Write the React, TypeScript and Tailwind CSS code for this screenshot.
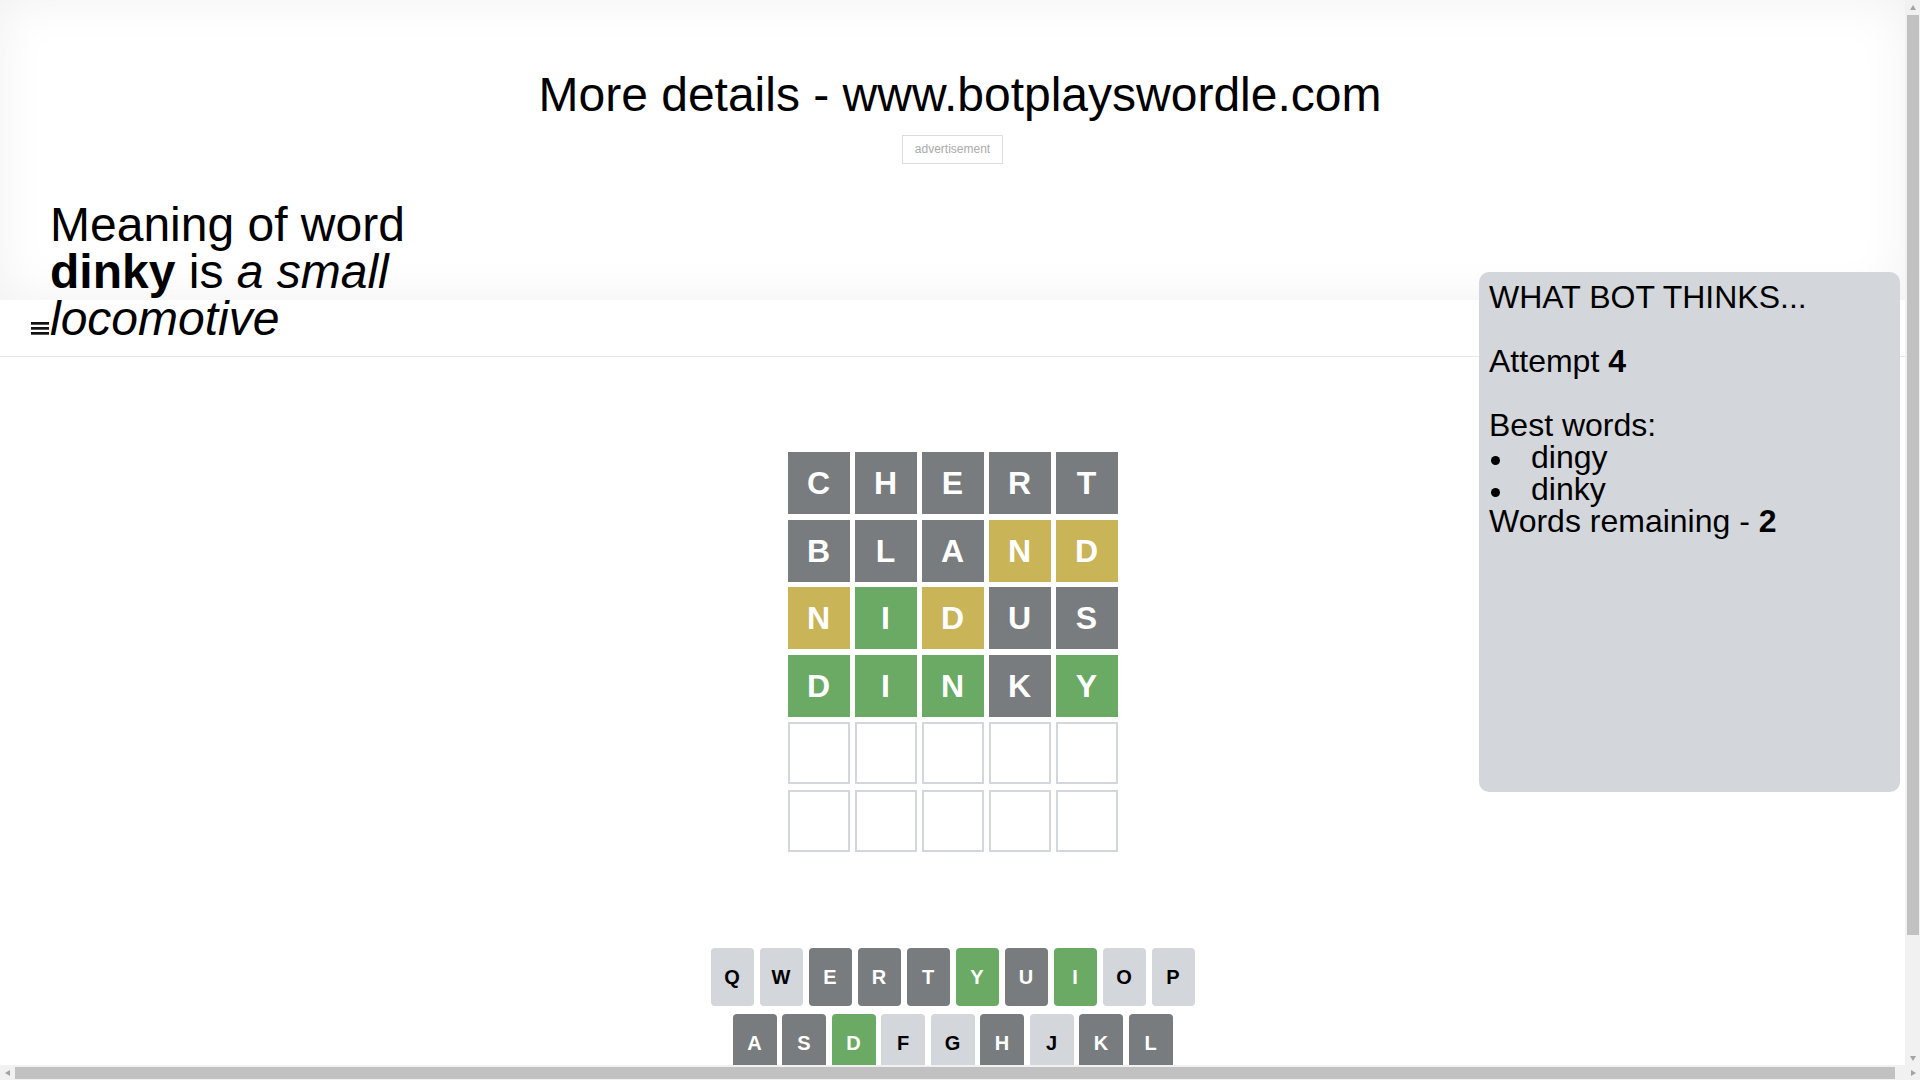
import React from 'react';

type Mark = 'gray' | 'yellow' | 'green' | 'empty';

const rows: { letter: string; mark: Mark }[][] = [
  [
    { letter: 'C', mark: 'gray' },
    { letter: 'H', mark: 'gray' },
    { letter: 'E', mark: 'gray' },
    { letter: 'R', mark: 'gray' },
    { letter: 'T', mark: 'gray' },
  ],
  [
    { letter: 'B', mark: 'gray' },
    { letter: 'L', mark: 'gray' },
    { letter: 'A', mark: 'gray' },
    { letter: 'N', mark: 'yellow' },
    { letter: 'D', mark: 'yellow' },
  ],
  [
    { letter: 'N', mark: 'yellow' },
    { letter: 'I', mark: 'green' },
    { letter: 'D', mark: 'yellow' },
    { letter: 'U', mark: 'gray' },
    { letter: 'S', mark: 'gray' },
  ],
  [
    { letter: 'D', mark: 'green' },
    { letter: 'I', mark: 'green' },
    { letter: 'N', mark: 'green' },
    { letter: 'K', mark: 'gray' },
    { letter: 'Y', mark: 'green' },
  ],
  Array.from({ length: 5 }, () => ({ letter: '', mark: 'empty' as Mark })),
  Array.from({ length: 5 }, () => ({ letter: '', mark: 'empty' as Mark })),
];

const tileClass: Record<Mark, string> = {
  gray: 'bg-[#787c7e] text-white',
  yellow: 'bg-[#c9b458] text-white',
  green: 'bg-[#6aaa64] text-white',
  empty: 'bg-white border-2 border-[#d3d6da]',
};

// keyboard state after four guesses
const keyState: Record<string, Mark> = {
  C: 'gray', H: 'gray', E: 'gray', R: 'gray', T: 'gray',
  B: 'gray', L: 'gray', A: 'gray', U: 'gray', S: 'gray', K: 'gray',
  N: 'green', D: 'green', I: 'green', Y: 'green',
};

const keyClass = (k: string) => {
  const m = keyState[k];
  if (m === 'gray') return 'bg-[#787c7e] text-white';
  if (m === 'green') return 'bg-[#6aaa64] text-white';
  if (m === 'yellow') return 'bg-[#c9b458] text-white';
  return 'bg-[#d3d6da] text-black';
};

function Key({ k, width }: { k: string; width: string }) {
  return (
    <div className={`${width} h-[58px] rounded-[4px] flex items-center justify-center text-[20px] font-bold ${keyClass(k)}`}>
      {k}
    </div>
  );
}

function Arrow({ dir }: { dir: 'up' | 'down' | 'left' | 'right' }) {
  const pts = {
    up: '4,1 7,6 1,6',
    down: '1,2 7,2 4,7',
    left: '6,1 6,7 1,4',
    right: '2,1 2,7 7,4',
  }[dir];
  return (
    <svg width="8" height="8" viewBox="0 0 8 8" aria-hidden="true">
      <polygon points={pts} fill="#a3a3a3" />
    </svg>
  );
}

export default function App() {
  return (
    <div className="w-screen h-screen flex flex-col overflow-hidden bg-white text-black font-['Liberation_Sans',Arial,sans-serif]">
      <div className="flex flex-1 min-h-0">
        <div className="relative flex-1 overflow-hidden">
          {/* top banner */}
          <section className="h-[300px] pt-[67px] shadow-[inset_0_0_50px_rgba(0,0,0,0.06)]">
            <h1 className="w-[1920px] text-center text-[48px] leading-[56px] font-normal">
              More details - www.botplayswordle.com
            </h1>
            <div className="mt-[12px] flex justify-center">
              <div className="border border-[#dddddd] px-[12px] py-[6px] text-[12px] leading-[15px] text-[#aaaaaa]">
                advertisement
              </div>
            </div>
            <p className="mt-[37px] ml-[50px] w-[360px] text-[48px] leading-[47px]">
              Meaning of word <b>dinky</b> is <i>a small locomotive</i>
            </p>
          </section>

          {/* header */}
          <header className="h-[57px] border-b border-[#e6e6e6] flex items-center pl-[31px]">
            <svg width="18" height="13" viewBox="0 0 18 13" aria-hidden="true">
              <rect x="0" y="0" width="18" height="2.7" fill="#111" />
              <rect x="0" y="5" width="18" height="2.7" fill="#111" />
              <rect x="0" y="10" width="18" height="2.7" fill="#111" />
            </svg>
          </header>

          {/* board + keyboard */}
          <main className="flex flex-col items-center pt-[95px] pb-[30px]">
            <div className="grid grid-cols-[repeat(5,62px)] auto-rows-[62px] gap-x-[5px] gap-y-[5.5px]">
              {rows.flat().map((t, i) => (
                <div
                  key={i}
                  className={`flex items-center justify-center text-[32px] font-bold ${tileClass[t.mark]}`}
                >
                  {t.letter}
                </div>
              ))}
            </div>

            <div className="mt-[96px] flex flex-col items-center gap-[8px]">
              <div className="flex gap-[6px]">
                {'QWERTYUIOP'.split('').map((k) => (
                  <Key key={k} k={k} width="w-[43px]" />
                ))}
              </div>
              <div className="flex gap-[5.5px]">
                {'ASDFGHJKL'.split('').map((k) => (
                  <Key key={k} k={k} width="w-[44px]" />
                ))}
              </div>
              <div className="flex gap-[6px]">
                <div className="w-[66px] h-[58px] rounded-[4px] flex items-center justify-center text-[12px] font-bold bg-[#d3d6da]">
                  ENTER
                </div>
                {'ZXCVBNM'.split('').map((k) => (
                  <Key key={k} k={k} width="w-[43px]" />
                ))}
                <div className="w-[66px] h-[58px] rounded-[4px] flex items-center justify-center text-[18px] font-bold bg-[#d3d6da]">
                  ⌫
                </div>
              </div>
            </div>
          </main>

          {/* bot panel, floats over the banner and header */}
          <aside className="absolute top-[272px] right-[5px] w-[421px] h-[520px] rounded-[10px] bg-[#d3d6da] pl-[10px] pt-[9px] text-[32px] leading-[32px]">
            <div>WHAT BOT THINKS...</div>
            <br />
            <div>
              Attempt <b>4</b>
            </div>
            <br />
            <div>Best words:</div>
            <ul>
              {['dingy', 'dinky'].map((w) => (
                <li key={w} className="flex items-start">
                  <span className="w-[42px] shrink-0 pl-[2px]">
                    <span className="block mt-[15px] w-[9px] h-[9px] rounded-full bg-black" />
                  </span>
                  {w}
                </li>
              ))}
            </ul>
            <div>
              Words remaining - <b>2</b>
            </div>
          </aside>
        </div>

        {/* vertical scrollbar */}
        <div className="w-[15px] flex flex-col items-center bg-[#f1f1f1]">
          <div className="h-[15px] flex items-center justify-center">
            <Arrow dir="up" />
          </div>
          <div className="w-[12px] h-[920px] bg-[#c1c1c1]" />
          <div className="flex-1" />
          <div className="h-[15px] flex items-center justify-center">
            <Arrow dir="down" />
          </div>
        </div>
      </div>

      {/* horizontal scrollbar */}
      <div className="h-[15px] flex items-center bg-[#f1f1f1]">
        <div className="w-[15px] flex justify-center">
          <Arrow dir="left" />
        </div>
        <div className="w-[1880px] h-[12px] bg-[#c1c1c1]" />
        <div className="flex-1" />
        <div className="w-[15px] flex justify-center">
          <Arrow dir="right" />
        </div>
      </div>
    </div>
  );
}
